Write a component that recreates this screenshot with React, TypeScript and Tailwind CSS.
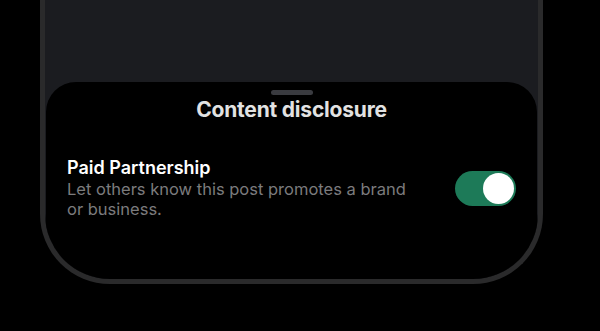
export default function App() {
  return (
    <div className="w-[600px] h-[331px] bg-black overflow-hidden" style={{ fontFamily: 'Inter, "Noto Sans", sans-serif' }}>
      <div className="ml-[40px] w-[503px] h-[284px] border-x-[5px] border-b-[5px] border-[#2a2a2b] rounded-b-[70px] overflow-hidden">
        <div className="h-full bg-[#1b1c20] flex flex-col rounded-b-[65px] overflow-hidden">
          <div className="h-[82px] shrink-0" />
          <section className="flex-1 mx-px bg-black rounded-t-[30px] flex flex-col">
            <div className="pt-[8px] flex justify-center">
              <div className="w-[42px] h-[5px] rounded-full bg-[#3a3b40]" />
            </div>
            <h2 className="mt-[1px] text-center text-[21px] leading-[28px] font-bold text-[#e2e2e2] tracking-[-0.2px]">
              Content disclosure
            </h2>
            <div className="mt-[33px] px-[21px] flex items-center justify-between">
              <div className="w-[350px]">
                <p className="text-[18px] leading-[22px] font-semibold text-white">Paid Partnership</p>
                <p className="text-[16.5px] leading-[20px] text-[#7b7b7d]">
                  Let others know this post promotes a brand or business.
                </p>
              </div>
              <button className="relative w-[61px] h-[35px] rounded-full bg-[#1d7a58] mt-[1px]">
                <span className="absolute right-[2px] top-[2px] w-[31px] h-[31px] rounded-full bg-white" />
              </button>
            </div>
          </section>
        </div>
      </div>
    </div>
  );
}
